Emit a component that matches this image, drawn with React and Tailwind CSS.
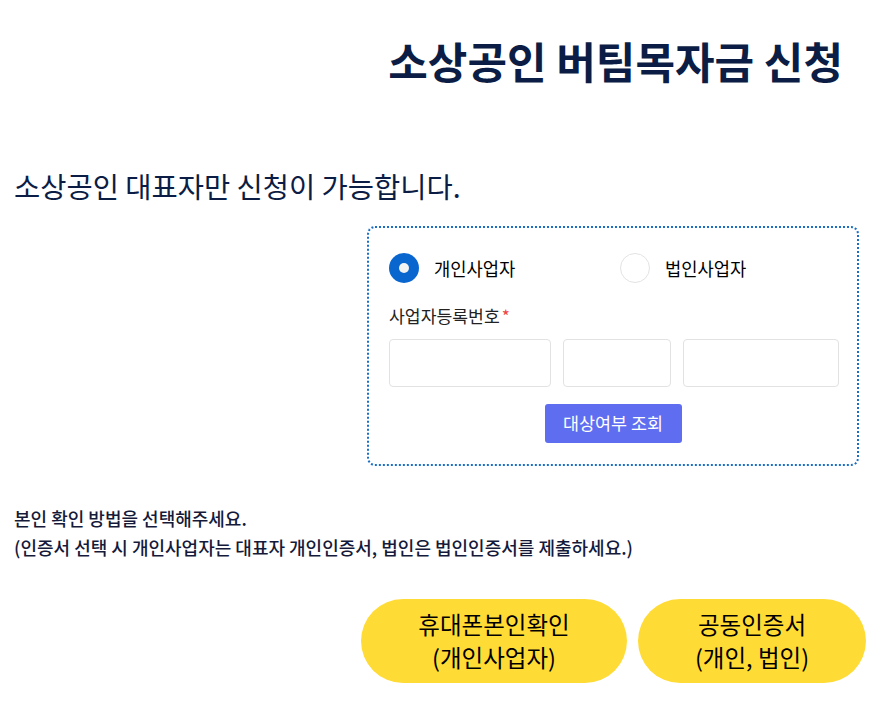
export default function App() {
  return (
    <div
      className="w-[894px] min-h-[712px] bg-white text-[#0b1d45]"
      style={{ fontFamily: '"Noto Sans CJK KR", "Noto Sans", sans-serif' }}
    >
      {/* Title */}
      <div className="flex justify-end pr-[51px] pt-[28px]">
        <h1 className="text-[43px] font-bold leading-[64px] text-[#0b1d45]">
          소상공인 버팀목자금 신청
        </h1>
      </div>

      {/* Notice */}
      <p className="mt-[76px] pl-[14px] text-[28.5px] leading-[36px] text-[#0b1d45]">
        소상공인 대표자만 신청이 가능합니다.
      </p>

      {/* Business number check box */}
      <div className="flex justify-end pr-[35px] mt-[22px]">
        <div className="w-[492px] h-[240px] rounded-[8px] border-2 border-dotted border-[#1a6fc4] px-[20px] pt-[25px]">
          <div className="flex items-center">
            <label className="flex items-center w-[231px]">
              <span className="w-[30px] h-[30px] rounded-full bg-[#0a66cf] flex items-center justify-center">
                <span className="w-[10px] h-[10px] rounded-full bg-[#f2f2f2]" />
              </span>
              <span className="ml-[15px] text-[17.7px] text-black">개인사업자</span>
            </label>
            <label className="flex items-center">
              <span className="w-[30px] h-[30px] rounded-full border border-[#e3e3e3] bg-white" />
              <span className="ml-[15px] text-[17.7px] text-black">법인사업자</span>
            </label>
          </div>

          <div className="mt-[22px] text-[17.2px] leading-[22px] text-[#222]">
            사업자등록번호<span className="text-[#ef4444] ml-[2px]">*</span>
          </div>

          <div className="mt-[12px] flex gap-[12px]">
            <input className="w-[162px] h-[48px] rounded-[4px] border border-[#e2e2e2] bg-white" />
            <input className="w-[108px] h-[48px] rounded-[4px] border border-[#e2e2e2] bg-white" />
            <input className="w-[156px] h-[48px] rounded-[4px] border border-[#e2e2e2] bg-white" />
          </div>

          <div className="flex justify-center mt-[17px]">
            <button className="w-[137px] h-[39px] rounded-[3px] bg-[#5f6ef0] text-white text-[17.4px]">
              대상여부 조회
            </button>
          </div>
        </div>
      </div>

      {/* Verification guide */}
      <div className="mt-[38px] pl-[14px] text-[18px] leading-[29px] text-[#151a3a] font-medium">
        <p>본인 확인 방법을 선택해주세요.</p>
        <p>(인증서 선택 시 개인사업자는 대표자 개인인증서, 법인은 법인인증서를 제출하세요.)</p>
      </div>

      {/* Verification buttons */}
      <div className="flex justify-end gap-[11px] pr-[28px] mt-[37px]">
        <button className="w-[266px] h-[84px] rounded-full bg-[#ffdb36] text-black text-[23.5px] leading-[33px]">
          휴대폰본인확인
          <br />
          (개인사업자)
        </button>
        <button className="w-[228px] h-[84px] rounded-full bg-[#ffdb36] text-black text-[23.5px] leading-[33px]">
          공동인증서
          <br />
          (개인, 법인)
        </button>
      </div>
    </div>
  );
}
